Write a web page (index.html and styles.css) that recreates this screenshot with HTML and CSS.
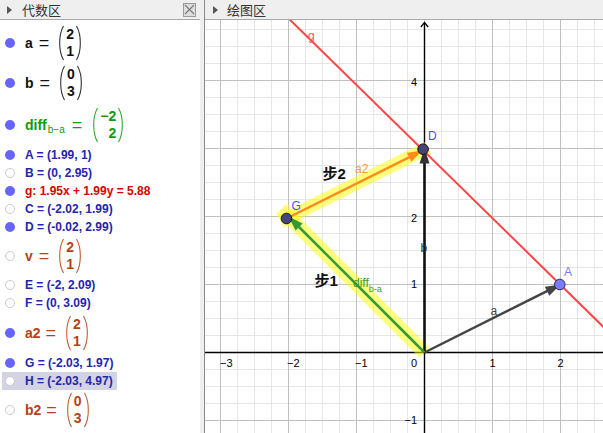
FILE: index.html
```html
<!DOCTYPE html>
<html lang="zh">
<head>
<meta charset="utf-8">
<title>GeoGebra</title>
<link rel="stylesheet" href="styles.css">
</head>
<body>
<div class="app">
  <section class="alg">
    <header class="phead">
      <span class="tri"></span><span class="ptitle">代数区</span>
      <span class="close"><svg width="11" height="11" viewBox="0 0 11 11"><path d="M1,1 L10,10 M10,1 L1,10" stroke="#7a7a7a" stroke-width="1.1"/></svg></span>
    </header>
    <ul class="items">
      <li class="row m40 black">
        <span class="in"><span class="dot on"></span><span class="mx"><span class="nm">a</span><span class="eq">=</span><span class="mat"><svg class="par" width="6" height="36" viewBox="0 0 6 36"><path d="M5.5,1 C0.4,10 0.4,26 5.5,35"/></svg><span class="col"><span>2</span><span>1</span></span><svg class="par" width="6" height="36" viewBox="0 0 6 36"><path d="M0.5,1 C5.6,10 5.6,26 0.5,35"/></svg></span></span></span>
      </li>
      <li class="row m40 black">
        <span class="in"><span class="dot on"></span><span class="mx"><span class="nm">b</span><span class="eq">=</span><span class="mat"><svg class="par" width="6" height="36" viewBox="0 0 6 36"><path d="M5.5,1 C0.4,10 0.4,26 5.5,35"/></svg><span class="col"><span>0</span><span>3</span></span><svg class="par" width="6" height="36" viewBox="0 0 6 36"><path d="M0.5,1 C5.6,10 5.6,26 0.5,35"/></svg></span></span></span>
      </li>
      <li class="row m43 green">
        <span class="in"><span class="dot on"></span><span class="mx"><span class="nm">diff<sub class="sub">b−a</sub></span><span class="eq eqd">=</span><span class="mat"><svg class="par" width="6" height="36" viewBox="0 0 6 36"><path d="M5.5,1 C0.4,10 0.4,26 5.5,35"/></svg><span class="col wide"><span>−2</span><span>2</span></span><svg class="par" width="6" height="36" viewBox="0 0 6 36"><path d="M0.5,1 C5.6,10 5.6,26 0.5,35"/></svg></span></span></span>
      </li>
      <li class="row r blue"><span class="in"><span class="dot on"></span><span class="pt">A = (1.99, 1)</span></span></li>
      <li class="row r blue"><span class="in"><span class="dot off"></span><span class="pt">B = (0, 2.95)</span></span></li>
      <li class="row r red"><span class="in"><span class="dot on"></span><span class="pt">g: 1.95x + 1.99y = 5.88</span></span></li>
      <li class="row r blue"><span class="in"><span class="dot off"></span><span class="pt">C = (-2.02, 1.99)</span></span></li>
      <li class="row r blue"><span class="in"><span class="dot on"></span><span class="pt">D = (-0.02, 2.99)</span></span></li>
      <li class="row m40 brown">
        <span class="in"><span class="dot off"></span><span class="mx"><span class="nm">v</span><span class="eq">=</span><span class="mat"><svg class="par" width="6" height="36" viewBox="0 0 6 36"><path d="M5.5,1 C0.4,10 0.4,26 5.5,35"/></svg><span class="col"><span>2</span><span>1</span></span><svg class="par" width="6" height="36" viewBox="0 0 6 36"><path d="M0.5,1 C5.6,10 5.6,26 0.5,35"/></svg></span></span></span>
      </li>
      <li class="row r blue"><span class="in"><span class="dot off"></span><span class="pt">E = (-2, 2.09)</span></span></li>
      <li class="row r blue"><span class="in"><span class="dot off"></span><span class="pt">F = (0, 3.09)</span></span></li>
      <li class="row m42 brown">
        <span class="in"><span class="dot on"></span><span class="mx"><span class="nm">a2</span><span class="eq eq2">=</span><span class="mat"><svg class="par" width="6" height="36" viewBox="0 0 6 36"><path d="M5.5,1 C0.4,10 0.4,26 5.5,35"/></svg><span class="col"><span>2</span><span>1</span></span><svg class="par" width="6" height="36" viewBox="0 0 6 36"><path d="M0.5,1 C5.6,10 5.6,26 0.5,35"/></svg></span></span></span>
      </li>
      <li class="row r blue"><span class="in"><span class="dot on"></span><span class="pt">G = (-2.03, 1.97)</span></span></li>
      <li class="row r blue"><span class="in sel"><span class="dot off"></span><span class="pt">H = (-2.03, 4.97)</span></span></li>
      <li class="row m40 brown">
        <span class="in"><span class="dot off"></span><span class="mx"><span class="nm">b2</span><span class="eq eq2">=</span><span class="mat"><svg class="par" width="6" height="36" viewBox="0 0 6 36"><path d="M5.5,1 C0.4,10 0.4,26 5.5,35"/></svg><span class="col"><span>0</span><span>3</span></span><svg class="par" width="6" height="36" viewBox="0 0 6 36"><path d="M0.5,1 C5.6,10 5.6,26 0.5,35"/></svg></span></span></span>
      </li>
    </ul>
  </section>
  <div class="splitter"></div>
  <section class="gfx">
    <header class="phead">
      <span class="tri tri2"></span><span class="ptitle ptitle2">绘图区</span>
    </header>
    <svg class="plot" width="398" height="413" viewBox="0 0 398 413">
      <defs>
        <pattern id="grid" patternUnits="userSpaceOnUse" x="219" y="332" width="68" height="68">
          <rect x="17" y="0" width="1" height="68" fill="#e6e6e6"/>
          <rect x="34" y="0" width="1" height="68" fill="#e6e6e6"/>
          <rect x="51" y="0" width="1" height="68" fill="#e6e6e6"/>
          <rect x="0" y="17" width="68" height="1" fill="#e6e6e6"/>
          <rect x="0" y="34" width="68" height="1" fill="#e6e6e6"/>
          <rect x="0" y="51" width="68" height="1" fill="#e6e6e6"/>
          <rect x="0" y="0" width="1" height="68" fill="#c0c0c0"/>
          <rect x="0" y="0" width="68" height="1" fill="#c0c0c0"/>
        </pattern>
      </defs>
      <rect x="0" y="0" width="398" height="413" fill="url(#grid)"/>
      <!-- axes -->
      <line x1="0" y1="332.5" x2="398" y2="332.5" stroke="#000" stroke-width="1.4"/>
      <line x1="219.5" y1="2.5" x2="219.5" y2="413" stroke="#000" stroke-width="1.4"/>
      <path d="M215.8,7 L219.5,2.5 L223.2,7" fill="none" stroke="#000" stroke-width="1.2"/>
      <g class="tick">
        <text x="15" y="347">−3</text>
        <text x="82" y="347">−2</text>
        <text x="150" y="347">−1</text>
        <text x="209" y="347" text-anchor="middle">0</text>
        <text x="287.5" y="347" text-anchor="middle">1</text>
        <text x="355.5" y="347" text-anchor="middle">2</text>
        <text x="212" y="65.5" text-anchor="end">4</text>
        <text x="212" y="201.5" text-anchor="end">2</text>
        <text x="212" y="267.5" text-anchor="end">1</text>
        <text x="212" y="404" text-anchor="end">−1</text>
      </g>
      <!-- highlights -->
      <line x1="219.5" y1="332.5" x2="76" y2="189" stroke="#ffff00" stroke-opacity="0.5" stroke-width="14"/>
      <line x1="81.5" y1="198.5" x2="217.5" y2="130.5" stroke="#ffff00" stroke-opacity="0.5" stroke-width="13" stroke-linecap="square"/>
      <!-- line g -->
      <line x1="69.9" y1="-15" x2="423.5" y2="331.5" stroke="#ff4545" stroke-width="2"/>
      <!-- vector a -->
      <line x1="219.5" y1="332.5" x2="343" y2="270.7" stroke="#444" stroke-width="2.5"/>
      <polygon points="355.5,264.5 344.3,275.7 339.8,266.7" fill="#444"/>
      <!-- vector b -->
      <line x1="219.5" y1="332.5" x2="219.5" y2="142" stroke="#111" stroke-width="2.5"/>
      <polygon points="219.5,128.5 224.5,143.5 214.5,143.5" fill="#333"/>
      <!-- vector diff -->
      <line x1="219.5" y1="332.5" x2="93" y2="206" stroke="#339933" stroke-width="2.5"/>
      <polygon points="83.5,196.5 97.6,203.6 90.6,210.6" fill="#339933"/>
      <!-- vector a2 -->
      <line x1="81.5" y1="198.5" x2="205" y2="136.8" stroke="#ff8c1a" stroke-width="2.5"/>
      <polygon points="217.5,130.5 206.3,141.7 201.8,132.7" fill="#ff8c1a"/>
      <!-- points -->
      <circle cx="218.1" cy="129.2" r="5.3" fill="#45457a" stroke="#111" stroke-width="1"/>
      <circle cx="81.5" cy="198.5" r="5.3" fill="#45457a" stroke="#111" stroke-width="1"/>
      <circle cx="354.8" cy="264.5" r="5.3" fill="#7b7bff" stroke="#2a2a55" stroke-width="1"/>
      <!-- labels -->
      <g class="lbl">
        <text x="223" y="120" fill="#4d4dff">D</text>
        <text x="86.5" y="190" fill="#4d4dff">G</text>
        <text x="359" y="256" fill="#7777ff">A</text>
        <text x="103" y="20" fill="#ff5555">g</text>
        <text x="285.5" y="295" fill="#444">a</text>
        <text x="215.5" y="231.5" fill="#333">b</text>
        <text x="150" y="153" fill="#ff9a2e">a2</text>
        <text x="148" y="267" fill="#2f9f2f">diff<tspan class="lsub" dy="5">b-a</tspan></text>
      </g>
      <g class="step">
        <text x="117.5" y="159">步2</text>
        <text x="109.5" y="266">步1</text>
      </g>
    </svg>
  </section>
</div>
</body>
</html>
```

FILE: styles.css
```css
* { box-sizing: border-box; margin: 0; padding: 0; }
html, body { width: 603px; height: 433px; overflow: hidden; }
body { font-family: "Liberation Sans", Arial, sans-serif; background: #fff; }

.app { display: flex; width: 603px; height: 433px; }

.alg { width: 200px; flex-shrink: 0; display: flex; flex-direction: column; background: #fff; }
.splitter { width: 5px; flex-shrink: 0; background: #efefef; border-right: 1px solid #8a8a8a; }
.gfx { flex: 1; min-width: 0; display: flex; flex-direction: column; }

.phead {
  height: 20px; flex-shrink: 0;
  background: #efefef; border-bottom: 1px solid #a8a8a8;
  display: flex; align-items: center;
}
.tri {
  width: 0; height: 0; margin-left: 7px;
  border-left: 5px solid #555;
  border-top: 4px solid transparent; border-bottom: 4px solid transparent;
}
.tri2 { margin-left: 8px; }
.ptitle {
  margin-left: 10px; font-family: "Noto Sans CJK SC", sans-serif;
  font-size: 13px; line-height: 1; color: #333;
}
.ptitle2 { margin-left: 9px; }
.close {
  margin-left: auto; margin-right: 4px;
  width: 13px; height: 14px;
  border: 1px solid #9a9a9a; background: #dedede;
  display: flex; align-items: center; justify-content: center;
}

.items { list-style: none; padding-top: 3px; }
.row { display: flex; align-items: stretch; }
.r { height: 18px; }
.m40 { height: 40px; }
.m42 { height: 42px; }
.m43 { height: 43px; }

.in { display: inline-flex; align-items: center; padding-left: 3px; margin-left: 2px; }
.sel { background: #d3d3e3; padding-right: 4px; }

.dot { width: 10px; height: 10px; border-radius: 50%; margin-right: 10px; flex-shrink: 0; }
.on { background: #6666ff; }
.off { background: #fff; border: 1.5px solid #cacaca; }

.pt { font-weight: bold; font-size: 12px; line-height: 18px; white-space: nowrap; }

.black { color: #111; }
.blue { color: #2424b0; }
.red { color: #dd0000; }
.green { color: #0f9a0f; }
.brown { color: #b44313; }

.mx { display: flex; align-items: center; font-weight: bold; font-size: 14px; }
.nm { white-space: nowrap; }
.sub { font-size: 10px; font-weight: normal; vertical-align: -3px; margin-left: 1px; line-height: 0; }
.eq { font-weight: normal; font-size: 18px; line-height: 1; margin: 0 9px 0 6px; }
.eqd { margin-left: 7px; margin-right: 10px; }
.eq2 { margin-left: 5px; }
.mat { display: flex; align-items: center; }
.par { display: block; fill: none; stroke: currentColor; stroke-width: 1.1; stroke-opacity: 0.85; }
.col { display: flex; flex-direction: column; align-items: flex-end; padding: 0 2px; line-height: 17px; }
.wide { padding-left: 2px; }

.plot { display: block; }
.tick text { font-family: "Liberation Sans", Arial, sans-serif; font-size: 11px; fill: #000; }
.lbl text { font-family: "Liberation Sans", Arial, sans-serif; font-size: 12px; }
.lbl .lsub { font-size: 9px; }
.step text { font-family: "Liberation Sans", "Noto Sans CJK SC", sans-serif; font-size: 15px; font-weight: bold; fill: #111; }
```
